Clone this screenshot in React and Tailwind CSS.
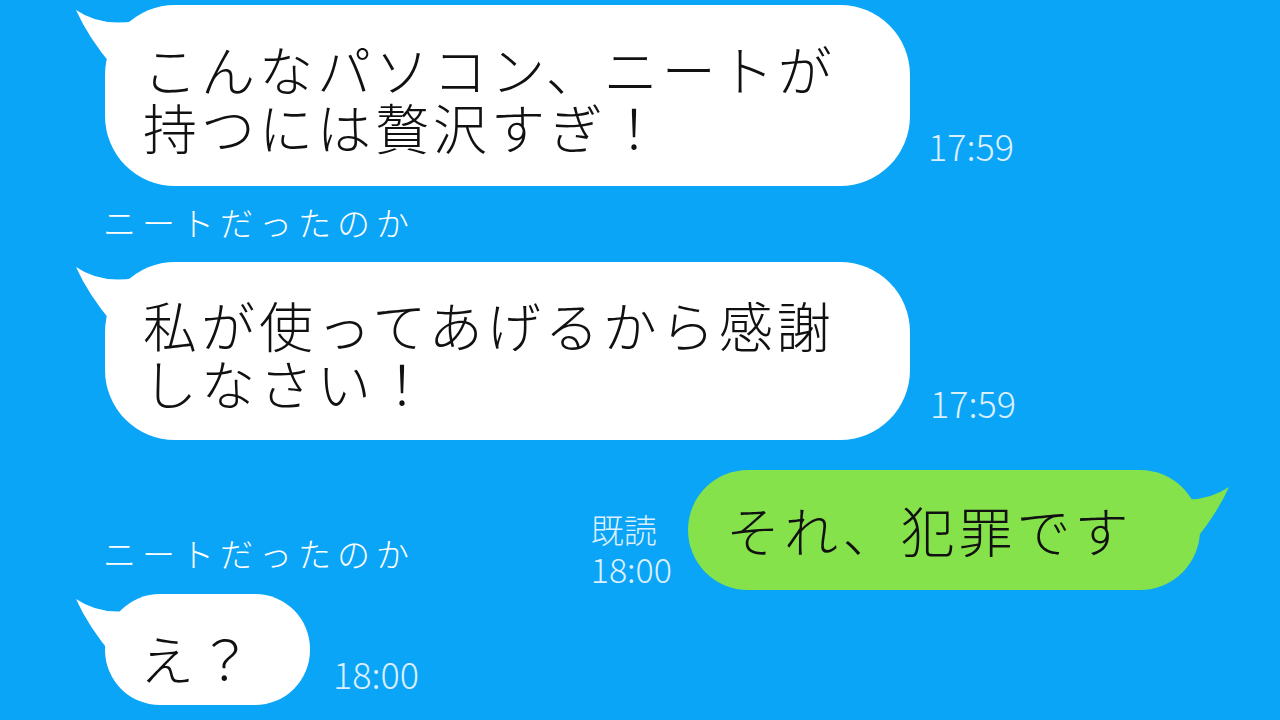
import React from 'react'

const TAIL_PATH = 'M3,3 Q28,20 62,14 L62,60 L40,60 Q15,30 3,3 Z'

function Tail({ side = 'left', color }) {
  if (side === 'right') {
    return (
      <svg
        className="absolute right-[-32px] top-[14px] w-[70px] h-[60px] -scale-x-100"
        viewBox="0 0 70 60"
      >
        <path d={TAIL_PATH} fill={color} />
      </svg>
    )
  }
  return (
    <svg className="absolute left-[-32px] top-[2px] w-[70px] h-[60px]" viewBox="0 0 70 60">
      <path d={TAIL_PATH} fill={color} />
    </svg>
  )
}

function Bubble({ className, lines }) {
  return (
    <div className={`relative bg-white shrink-0 ${className}`}>
      <Tail color="#ffffff" />
      <div className="relative text-[54px] leading-[58px] tracking-[4px] text-[#111]">
        {lines.map((l) => (
          <div key={l} className="whitespace-nowrap">{l}</div>
        ))}
      </div>
    </div>
  )
}

function Time({ className, children }) {
  return (
    <div className={`text-[36px] leading-none text-[#dcefff] whitespace-nowrap ${className}`}>
      {children}
    </div>
  )
}

function Label({ className }) {
  return (
    <div className={`text-[33px] leading-[40px] tracking-[6px] text-white whitespace-nowrap ${className}`}>
      ニートだったのか
    </div>
  )
}

export default function App() {
  return (
    <div className="w-[1280px] h-[720px] overflow-hidden bg-[#0aa5f6] font-['Noto_Sans_CJK_JP',sans-serif] font-light pl-[105px] pt-[5px]">
      <div className="flex items-end">
        <Bubble
          className="w-[805px] h-[181px] rounded-[70px] pt-[35px] pl-[38px]"
          lines={['こんなパソコン、ニートが', '持つには贅沢すぎ！']}
        />
        <Time className="ml-[18px] mb-[23px]">17:59</Time>
      </div>

      <Label className="mt-[16px] -ml-[2px]" />

      <div className="flex items-end mt-[20px]">
        <Bubble
          className="w-[805px] h-[178px] rounded-[70px] pt-[34px] pl-[38px]"
          lines={['私が使ってあげるから感謝', 'しなさい！']}
        />
        <Time className="ml-[20px] mb-[20px]">17:59</Time>
      </div>

      <div className="flex items-end justify-between mt-[30px] pr-[80px]">
        <Label className="mb-[17px] -ml-[2px]" />
        <div className="flex items-end gap-[16px]">
          <div className="mb-[1px] text-[#dcefff]">
            <div className="text-[33px] leading-[40px]">既読</div>
            <div className="text-[34px] leading-[40px]">18:00</div>
          </div>
          <div className="relative w-[512px] h-[120px] rounded-[60px] bg-[#86e24a] pl-[38px] flex items-center">
            <Tail side="right" color="#86e24a" />
            <div className="relative text-[54px] leading-[58px] tracking-[4px] text-[#111] whitespace-nowrap">
              それ、犯罪です
            </div>
          </div>
        </div>
      </div>

      <div className="flex items-end mt-[4px]">
        <Bubble
          className="w-[205px] h-[111px] rounded-[55px] pt-[35px] pl-[35px]"
          lines={['え？']}
        />
        <Time className="ml-[23px] mb-[14px]">18:00</Time>
      </div>
    </div>
  )
}
